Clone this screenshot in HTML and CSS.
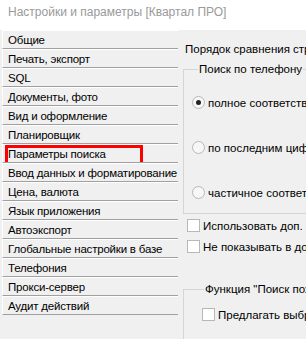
FILE: index.html
```html
<!DOCTYPE html>
<html lang="ru">
<head>
  <meta charset="UTF-8">
  <title>Настройки и параметры [Квартал ПРО]</title>
  <link rel="stylesheet" href="styles.css">
</head>
<body>

  <header class="titlebar">Настройки и параметры [Квартал ПРО]</header>

  <div class="window">
    <!-- Section list -->
    <nav class="nav">
      <div class="nav-item">Общие</div>
      <div class="nav-item">Печать, экспорт</div>
      <div class="nav-item">SQL</div>
      <div class="nav-item">Документы, фото</div>
      <div class="nav-item">Вид и оформление</div>
      <div class="nav-item">Планировщик</div>
      <div class="nav-item marked">Параметры поиска<span class="mark"></span></div>
      <div class="nav-item">Ввод данных и форматирование</div>
      <div class="nav-item">Цена, валюта</div>
      <div class="nav-item">Язык приложения</div>
      <div class="nav-item">Автоэкспорт</div>
      <div class="nav-item">Глобальные настройки в базе</div>
      <div class="nav-item">Телефония</div>
      <div class="nav-item">Прокси-сервер</div>
      <div class="nav-item">Аудит действий</div>
    </nav>

    <!-- Search settings -->
    <section class="panel">
      <div class="caption">Порядок сравнения строк</div>

      <fieldset class="group phone">
        <legend>Поиск по телефону</legend>
        <div class="radio-row"><span class="radio checked"></span>полное соответствие</div>
        <div class="radio-row"><span class="radio"></span>по последним цифрам</div>
        <div class="radio-row"><span class="radio"></span>частичное соответствие</div>
      </fieldset>

      <div class="check-row first"><span class="check"></span>Использовать доп. алгоритм</div>
      <div class="check-row"><span class="check"></span>Не показывать в документах</div>

      <fieldset class="group similar">
        <legend>Функция "Поиск похожих"</legend>
        <div class="check-row"><span class="check"></span>Предлагать выбрать</div>
      </fieldset>
    </section>
  </div>

</body>
</html>
```

FILE: styles.css
```css
body {
  margin: 0;
  font-family: 'Liberation Sans', Arial, sans-serif;
  font-size: 11.5px;
  color: #000;
  background: #f0f0f0;
  width: 306px;
  height: 339px;
  overflow: hidden;
}

.titlebar {
  height: 30px;
  background: #fff;
  color: #9a9a9a;
  padding-left: 8px;
  font-size: 12px;
  line-height: 25px;
  box-sizing: border-box;
}

.window {
  display: flex;
}

.nav {
  width: 176px;
  flex: none;
  padding-left: 2px;
}

.nav-item {
  position: relative;
  height: 19px;
  box-sizing: border-box;
  border-top: 1px solid #fff;
  border-left: 1px solid #fff;
  border-bottom: 1px solid #a0a0a0;
  padding-left: 5px;
  line-height: 19px;
  letter-spacing: -0.2px;
  white-space: nowrap;
  overflow: hidden;
}

.mark {
  position: absolute;
  left: 2px;
  top: 0;
  width: 138px;
  height: 21px;
  border: 3px solid #f00;
  box-sizing: border-box;
}

.panel {
  flex: 1;
  min-width: 0;
  padding: 12px 0 0 3px;
  margin-left: 2px;
  white-space: nowrap;
  overflow: hidden;
}

.caption {
  line-height: 15px;
  padding-left: 2px;
}

.group {
  margin: 5px 0 0;
  width: 200px;
  border: 1px solid #d5d5d5;
  padding: 0;
}

.group legend {
  margin-left: 6px;
  padding: 0 1px;
  line-height: 15px;
}

.phone {
  padding: 18px 0 13px 8px;
  display: flex;
  flex-direction: column;
  gap: 30px;
}

.radio-row {
  display: flex;
  align-items: center;
  height: 15px;
}

.radio {
  flex: none;
  width: 13px;
  height: 13px;
  box-sizing: border-box;
  border-radius: 50%;
  border: 1px solid #b8b8b8;
  background: #f7f7f7;
  margin-right: 3px;
  position: relative;
}

.radio.checked::after {
  content: "";
  position: absolute;
  left: 3px;
  top: 3px;
  width: 5px;
  height: 5px;
  border-radius: 50%;
  background: #222;
}

.check-row {
  display: flex;
  align-items: center;
  height: 13px;
  margin-left: 4px;
  margin-top: 8px;
}

.check-row.first {
  margin-top: 5px;
}

.check {
  flex: none;
  width: 13px;
  height: 13px;
  box-sizing: border-box;
  border: 1px solid #b8b8b8;
  background: #fff;
  margin-right: 3px;
}

.similar {
  margin-top: 29px;
  height: 80px;
  padding: 11px 0 0 14px;
}

.similar .check-row {
  margin-top: 0;
}
```
